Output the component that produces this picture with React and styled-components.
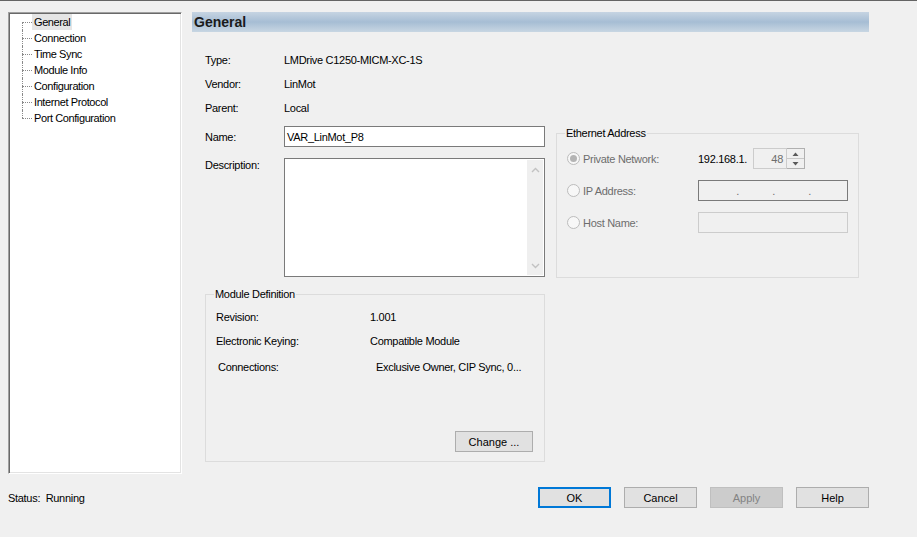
import React from "react";
import styled, { createGlobalStyle } from "styled-components";

const GlobalStyle = createGlobalStyle`
  html, body {
    margin: 0;
    padding: 0;
    background: #f0f0f0;
  }
  * {
    box-sizing: border-box;
  }
`;

const Window = styled.div`
  width: 917px;
  height: 537px;
  background: #f0f0f0;
  border-top: 1px solid #646464;
  font-family: "Liberation Sans", Arial, sans-serif;
  font-size: 11px;
  letter-spacing: -0.3px;
  color: #000;
  overflow: hidden;
`;

const Main = styled.div`
  display: flex;
  padding: 11px 0 0 8px;
`;

const TreePanel = styled.div`
  width: 174px;
  height: 462px;
  background: #fff;
  border: 1px solid;
  border-color: #a0a0a0 #ffffff #ffffff #a0a0a0;
  box-shadow: inset 1px 1px 0 #696969, inset -1px -1px 0 #e3e3e3;
  padding: 1px 0 0 13px;
`;

const TreeList = styled.ul`
  list-style: none;
  margin: 0;
  padding: 0;
`;

const TreeItem = styled.li`
  position: relative;
  height: 16px;
  display: flex;
  align-items: center;
  padding-left: 10px;
  letter-spacing: -0.4px;

  &::before {
    content: "";
    position: absolute;
    left: 0;
    top: 8px;
    width: 10px;
    border-top: 1px dotted #8a8a8a;
  }

  &::after {
    content: "";
    position: absolute;
    left: 0;
    top: ${(p) => (p.$first ? "8px" : "0")};
    height: ${(p) => (p.$last ? "8px" : p.$first ? "8px" : "16px")};
    border-left: 1px dotted #8a8a8a;
  }
`;

const TreeLabel = styled.span`
  padding: 1px 2px 1px 2px;
  line-height: 14px;
  background: ${(p) => (p.$selected ? "#e5e5e5" : "transparent")};
`;

const Pane = styled.div`
  width: 677px;
  margin-left: 10px;
  display: flex;
  flex-direction: column;
`;

const HeaderBar = styled.div`
  height: 20px;
  background: linear-gradient(
    to bottom,
    #c6d4e2 0%,
    #a6bdd4 50%,
    #c8d6e3 100%
  );
  padding-left: 2px;
  display: flex;
  align-items: center;
  font-size: 14px;
  font-weight: bold;
  letter-spacing: 0;
  color: #1a1a1a;
`;

const InfoBlock = styled.div`
  padding: 16px 0 0 13px;
`;

const InfoRow = styled.div`
  display: grid;
  grid-template-columns: 79px 1fr;
  height: 24px;
  align-items: center;
`;

const Lower = styled.div`
  display: flex;
  padding-left: 13px;
`;

const LeftCol = styled.div`
  width: 340px;
  display: flex;
  flex-direction: column;
`;

const FieldRow = styled.div`
  display: grid;
  grid-template-columns: 79px 261px;
  align-items: ${(p) => p.$align || "center"};
  margin-top: ${(p) => p.$top}px;
`;

const FieldLabel = styled.span`
  line-height: 14px;
`;

const TextInput = styled.div`
  height: 21px;
  border: 1px solid #7a7a7a;
  background: #fff;
  display: flex;
  align-items: center;
  padding-left: 2px;
`;

const TextArea = styled.div`
  height: 119px;
  border: 1px solid #7a7a7a;
  background: #fff;
  display: flex;
  justify-content: flex-end;
  padding: 1px;
`;

const ScrollTrack = styled.div`
  width: 16px;
  background: #efefef;
  display: flex;
  flex-direction: column;
  justify-content: space-between;
  align-items: center;
  padding: 7px 0 6px;
`;

const GroupBox = styled.div`
  position: relative;
  border: 1px solid #dcdcdc;
  width: ${(p) => p.$w}px;
  height: ${(p) => p.$h}px;
  margin-top: ${(p) => p.$top}px;
  margin-left: ${(p) => p.$left || 0}px;
  display: flex;
  flex-direction: column;
`;

const GroupTitle = styled.span`
  position: absolute;
  top: -8px;
  left: 8px;
  padding: 0 1px;
  line-height: 14px;
  background: #f0f0f0;
`;

const DefBody = styled.div`
  display: flex;
  flex-direction: column;
  padding: 15px 11px 9px 10px;
  height: 100%;
`;

const DefRow = styled.div`
  display: grid;
  grid-template-columns: ${(p) => (p.$shift ? "158px" : "154px")} 1fr;
  padding-left: ${(p) => (p.$shift ? 2 : 0)}px;
  line-height: 14px;
  margin-top: ${(p) => p.$top || 0}px;
`;

const ChangeButton = styled.button`
  margin-top: auto;
  align-self: flex-end;
  width: 78px;
  height: 21px;
  border: 1px solid #adadad;
  background: #e1e1e1;
  font: inherit;
  color: #000;
  padding: 0;
`;

const EthBody = styled.div`
  display: flex;
  flex-direction: column;
  gap: 11px;
  padding: 14px 0 0 10px;
`;

const EthRow = styled.div`
  display: grid;
  grid-template-columns: 131px 1fr;
  height: 21px;
  align-items: center;
`;

const RadioWrap = styled.span`
  display: flex;
  align-items: center;
  color: #6d6d6d;
`;

const Radio = styled.span`
  width: 13px;
  height: 13px;
  border-radius: 50%;
  border: 1px solid #bcbcbc;
  background: #f7f7f7;
  margin-right: 3px;
  display: flex;
  align-items: center;
  justify-content: center;

  &::after {
    content: "";
    width: 7px;
    height: 7px;
    border-radius: 50%;
    background: ${(p) => (p.$checked ? "#b4b4b4" : "transparent")};
  }
`;

const IpPrefix = styled.div`
  display: flex;
  align-items: center;
`;

const PrefixText = styled.span`
  width: 55px;
`;

const SpinBox = styled.div`
  width: 34px;
  height: 21px;
  border: 1px solid #cccccc;
  background: #f0f0f0;
  color: #6d6d6d;
  display: flex;
  align-items: center;
  justify-content: flex-end;
  padding-right: 3px;
`;

const SpinButtons = styled.div`
  width: 18px;
  height: 21px;
  border: 1px solid #b0b0b0;
  border-left: none;
  display: flex;
  flex-direction: column;
`;

const SpinHalf = styled.div`
  flex: 1;
  display: flex;
  align-items: center;
  justify-content: center;
  border-top: ${(p) => (p.$bottom ? "1px solid #c8c8c8" : "none")};
`;

const DisabledInput = styled.div`
  width: 150px;
  height: 21px;
  border: 1px solid ${(p) => (p.$dark ? "#7a7a7a" : "#cccccc")};
  background: #f0f0f0;
  display: flex;
  align-items: center;
  color: #6d6d6d;
`;

const IpDot = styled.span`
  width: ${(p) => p.$w}px;
  text-align: right;
`;

const Footer = styled.div`
  display: flex;
  align-items: center;
  justify-content: space-between;
  margin-top: 13px;
  height: 21px;
  padding: 0 48px 0 8px;
`;

const ButtonGroup = styled.div`
  display: flex;
  gap: 13px;
`;

const DialogButton = styled.button`
  width: 73px;
  height: 21px;
  padding: 0;
  font: inherit;
  background: ${(p) => (p.$disabled ? "#cccccc" : "#e1e1e1")};
  color: ${(p) => (p.$disabled ? "#838383" : "#000")};
  border: ${(p) =>
    p.$default
      ? "2px solid #0078d7"
      : p.$disabled
      ? "1px solid #bfbfbf"
      : "1px solid #adadad"};
`;

const Chevron = ({ up }) => (
  <svg width="9" height="6" viewBox="0 0 9 6">
    <path
      d={up ? "M1 5 L4.5 1.5 L8 5" : "M1 1 L4.5 4.5 L8 1"}
      fill="none"
      stroke="#c2c2c2"
      strokeWidth="1.4"
    />
  </svg>
);

const Triangle = ({ up }) => (
  <svg width="7" height="4" viewBox="0 0 7 4">
    <path d={up ? "M0.5 4 L3.5 0.5 L6.5 4 Z" : "M0.5 0 L3.5 3.5 L6.5 0 Z"} fill="#5a5a5a" />
  </svg>
);

const treeItems = [
  "General",
  "Connection",
  "Time Sync",
  "Module Info",
  "Configuration",
  "Internet Protocol",
  "Port Configuration",
];

const info = [
  ["Type:", "LMDrive C1250-MICM-XC-1S"],
  ["Vendor:", "LinMot"],
  ["Parent:", "Local"],
];

export default function App() {
  return (
    <>
      <GlobalStyle />
      <Window>
        <Main>
          <TreePanel>
            <TreeList>
              {treeItems.map((item, i) => (
                <TreeItem
                  key={item}
                  $first={i === 0}
                  $last={i === treeItems.length - 1}
                >
                  <TreeLabel $selected={i === 0}>{item}</TreeLabel>
                </TreeItem>
              ))}
            </TreeList>
          </TreePanel>

          <Pane>
            <HeaderBar>General</HeaderBar>
            <InfoBlock>
              {info.map(([k, v]) => (
                <InfoRow key={k}>
                  <span>{k}</span>
                  <span>{v}</span>
                </InfoRow>
              ))}
            </InfoBlock>

            <Lower>
              <LeftCol>
                <FieldRow $top={6}>
                  <FieldLabel>Name:</FieldLabel>
                  <TextInput>VAR_LinMot_P8</TextInput>
                </FieldRow>
                <FieldRow $top={11} $align="start">
                  <FieldLabel>Description:</FieldLabel>
                  <TextArea>
                    <ScrollTrack>
                      <Chevron up />
                      <Chevron />
                    </ScrollTrack>
                  </TextArea>
                </FieldRow>

                <GroupBox $w={340} $h={168} $top={17}>
                  <GroupTitle>Module Definition</GroupTitle>
                  <DefBody>
                    <DefRow>
                      <span>Revision:</span>
                      <span>1.001</span>
                    </DefRow>
                    <DefRow $top={10}>
                      <span>Electronic Keying:</span>
                      <span>Compatible Module</span>
                    </DefRow>
                    <DefRow $top={12} $shift>
                      <span>Connections:</span>
                      <span>Exclusive Owner, CIP Sync, 0...</span>
                    </DefRow>
                    <ChangeButton>Change ...</ChangeButton>
                  </DefBody>
                </GroupBox>
              </LeftCol>

              <GroupBox $w={303} $h={145} $top={13} $left={11}>
                <GroupTitle>Ethernet Address</GroupTitle>
                <EthBody>
                  <EthRow>
                    <RadioWrap>
                      <Radio $checked />
                      Private Network:
                    </RadioWrap>
                    <IpPrefix>
                      <PrefixText>192.168.1.</PrefixText>
                      <SpinBox>48</SpinBox>
                      <SpinButtons>
                        <SpinHalf>
                          <Triangle up />
                        </SpinHalf>
                        <SpinHalf $bottom>
                          <Triangle />
                        </SpinHalf>
                      </SpinButtons>
                    </IpPrefix>
                  </EthRow>
                  <EthRow>
                    <RadioWrap>
                      <Radio />
                      IP Address:
                    </RadioWrap>
                    <DisabledInput $dark>
                      <IpDot $w={40}>.</IpDot>
                      <IpDot $w={36}>.</IpDot>
                      <IpDot $w={36}>.</IpDot>
                    </DisabledInput>
                  </EthRow>
                  <EthRow>
                    <RadioWrap>
                      <Radio />
                      Host Name:
                    </RadioWrap>
                    <DisabledInput />
                  </EthRow>
                </EthBody>
              </GroupBox>
            </Lower>
          </Pane>
        </Main>

        <Footer>
          <span>Status:&nbsp; Running</span>
          <ButtonGroup>
            <DialogButton $default>OK</DialogButton>
            <DialogButton>Cancel</DialogButton>
            <DialogButton $disabled>Apply</DialogButton>
            <DialogButton>Help</DialogButton>
          </ButtonGroup>
        </Footer>
      </Window>
    </>
  );
}
